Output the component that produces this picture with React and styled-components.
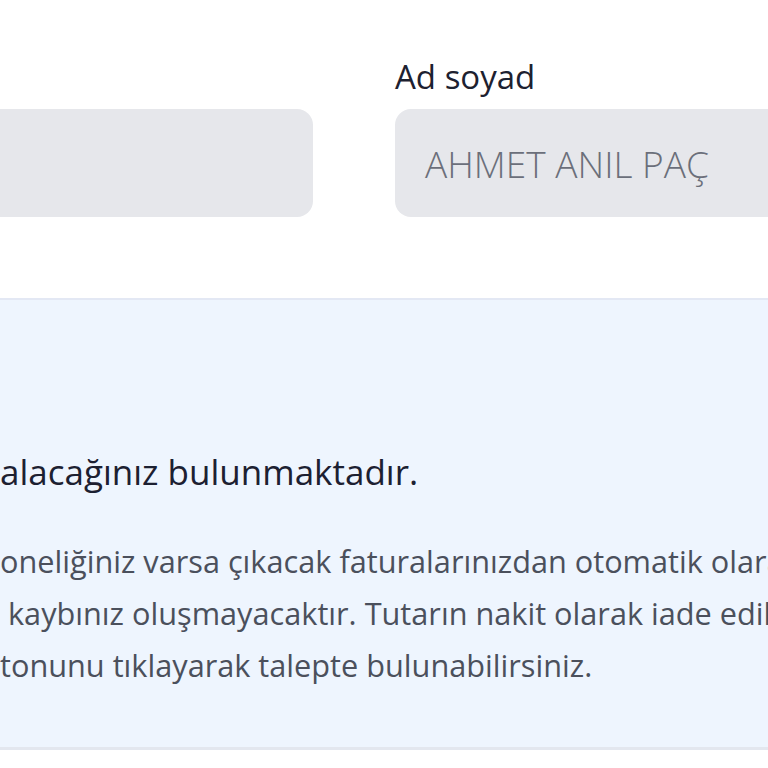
import React from "react";
import styled, { createGlobalStyle } from "styled-components";

const Global = createGlobalStyle`
  html, body { margin: 0; padding: 0; background: #ffffff; }
  body { font-family: "Open Sans", "Liberation Sans", sans-serif; overflow: hidden; }
`;

const Viewport = styled.div`
  width: 768px;
  height: 768px;
  overflow: hidden;
  background: #ffffff;
`;

const Content = styled.div`
  width: 900px;
  margin-left: -40px;
  display: flex;
  flex-direction: column;
`;

const FormRow = styled.div`
  display: grid;
  grid-template-columns: 353px 1fr;
  column-gap: 82px;
  padding-top: 59px;
`;

const Field = styled.div`
  display: flex;
  flex-direction: column;
  gap: 14px;
`;

const Label = styled.label`
  font-size: 33px;
  line-height: 36px;
  color: #1d2130;
  visibility: ${(p) => (p.$hidden ? "hidden" : "visible")};
`;

const InputBox = styled.div`
  height: 108px;
  border-radius: 16px;
  background: #e6e7eb;
  display: flex;
  align-items: center;
  padding-left: 30px;
  font-size: 37px;
  font-weight: 300;
  color: #6b6f7a;
  white-space: nowrap;
`;

const InfoPanel = styled.section`
  margin-top: 81px;
  background: #eef5fe;
  border-top: 2px solid #e3e8f4;
  border-bottom: 3px solid #e3e7ef;
  padding: 153px 0 56px 40px;
  display: flex;
  flex-direction: column;
`;

const Heading = styled.div`
  font-size: 35px;
  line-height: 38px;
  color: #1c2031;
  white-space: nowrap;
`;

const Body = styled.div`
  margin-top: 44px;
  font-size: 30.7px;
  line-height: 52px;
  color: #4b505c;
`;

const Line = styled.div`
  white-space: nowrap;
`;

export default function App() {
  return (
    <Viewport>
      <Global />
      <Content>
        <FormRow>
          <Field>
            <Label $hidden>Telefon</Label>
            <InputBox />
          </Field>
          <Field>
            <Label>Ad soyad</Label>
            <InputBox>AHMET ANIL PAÇ</InputBox>
          </Field>
        </FormRow>
        <InfoPanel>
          <Heading>alacağınız bulunmaktadır.</Heading>
          <Body>
            <Line>oneliğiniz varsa çıkacak faturalarınızdan otomatik olarak düşülecektir.</Line>
            <Line>{"\u00a0"}kaybınız oluşmayacaktır. Tutarın nakit olarak iade edilmesini</Line>
            <Line>tonunu tıklayarak talepte bulunabilirsiniz.</Line>
          </Body>
        </InfoPanel>
      </Content>
    </Viewport>
  );
}
